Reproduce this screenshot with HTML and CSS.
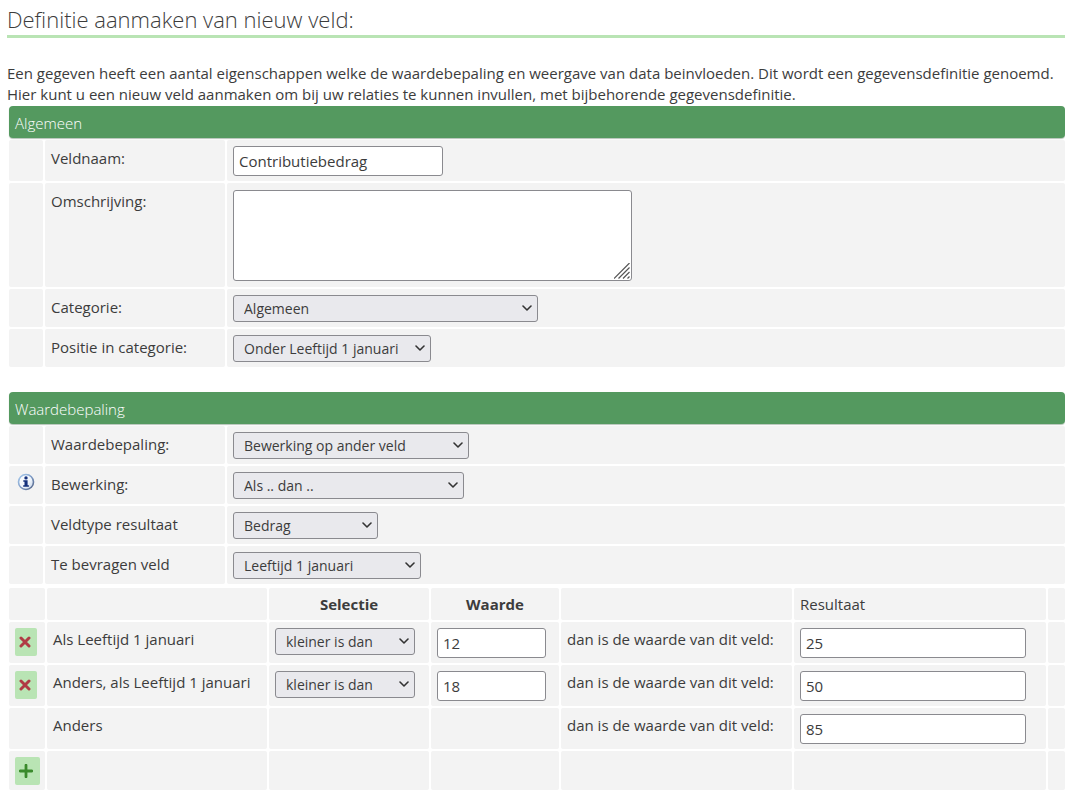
FILE: index.html
```
<!DOCTYPE html>
<html lang="nl">
<head>
<meta charset="utf-8">
<title>Definitie aanmaken van nieuw veld</title>
<link rel="stylesheet" href="styles.css">
</head>
<body>
<main class="page">
  <h1 class="title">Definitie aanmaken van nieuw veld:</h1>
  <p class="intro">Een gegeven heeft een aantal eigenschappen welke de waardebepaling en weergave van data beinvloeden. Dit wordt een gegevensdefinitie genoemd.<br>Hier kunt u een nieuw veld aanmaken om bij uw relaties te kunnen invullen, met bijbehorende gegevensdefinitie.</p>

  <form>
    <section class="panel">
      <h2 class="panel-title">Algemeen</h2>
      <div class="row">
        <div class="cell"></div>
        <div class="cell label"><label for="veldnaam">Veldnaam:</label></div>
        <div class="cell"><input class="field name-field" id="veldnaam" type="text" value="Contributiebedrag"></div>
      </div>
      <div class="row">
        <div class="cell"></div>
        <div class="cell label"><label for="omschrijving">Omschrijving:</label></div>
        <div class="cell area-cell">
          <div class="area-wrap">
            <textarea class="field area" id="omschrijving"></textarea>
            <svg class="grip" width="16" height="16" viewBox="0 0 16 16" aria-hidden="true"><path d="M0 15.500L15.500 0M4.500 15.500L15.500 4.500M9 15.500L15.500 9M13.500 15.500L15.500 13.500" stroke="#555" stroke-width="1.200" fill="none"/></svg>
          </div>
        </div>
      </div>
      <div class="row">
        <div class="cell"></div>
        <div class="cell label"><label for="categorie">Categorie:</label></div>
        <div class="cell"><select class="select w-305" id="categorie"><option>Algemeen</option></select></div>
      </div>
      <div class="row">
        <div class="cell"></div>
        <div class="cell label"><label for="positie">Positie in categorie:</label></div>
        <div class="cell"><select class="select w-198" id="positie"><option>Onder Leeftijd 1 januari</option></select></div>
      </div>
    </section>

    <section class="panel">
      <h2 class="panel-title">Waardebepaling</h2>
      <div class="row">
        <div class="cell"></div>
        <div class="cell label"><label for="bepaling">Waardebepaling:</label></div>
        <div class="cell"><select class="select w-236" id="bepaling"><option>Bewerking op ander veld</option></select></div>
      </div>
      <div class="row">
        <div class="cell info">
          <svg width="18" height="18" viewBox="0 0 18 18" role="img" aria-label="Informatie">
            <defs>
              <linearGradient id="ring" x1="0" y1="0" x2="1" y2="1"><stop offset="0" stop-color="#a9cdf0"/><stop offset=".5" stop-color="#7f9cc6"/><stop offset="1" stop-color="#4f5f82"/></linearGradient>
              <linearGradient id="disc" x1="0" y1="0" x2="1" y2="1"><stop offset="0" stop-color="#fff"/><stop offset=".6" stop-color="#eef4fb"/><stop offset="1" stop-color="#bccbe0"/></linearGradient>
            </defs>
            <circle cx="9" cy="9" r="7.500" fill="url(#disc)" stroke="url(#ring)" stroke-width="1.600"/>
            <circle cx="9" cy="4.900" r="1.700" fill="#14307c"/>
            <path d="M6.300 7.200H10.600V12.200H11.900V13.700H6.200V12.200H7.500V8.700H6.300Z" fill="#14307c"/>
          </svg>
        </div>
        <div class="cell label"><label for="bewerking">Bewerking:</label></div>
        <div class="cell"><select class="select w-231" id="bewerking"><option>Als .. dan ..</option></select></div>
      </div>
      <div class="row">
        <div class="cell"></div>
        <div class="cell label"><label for="veldtype">Veldtype resultaat</label></div>
        <div class="cell"><select class="select w-145" id="veldtype"><option>Bedrag</option></select></div>
      </div>
      <div class="row">
        <div class="cell"></div>
        <div class="cell label"><label for="bevragen">Te bevragen veld</label></div>
        <div class="cell"><select class="select w-188" id="bevragen"><option>Leeftijd 1 januari</option></select></div>
      </div>
    </section>

    <table class="rules">
      <colgroup><col class="c-act"><col class="c-cond"><col class="c-sel"><col class="c-val"><col class="c-text"><col class="c-res"><col></colgroup>
      <thead>
        <tr><td></td><td></td><th scope="col">Selectie</th><th scope="col">Waarde</th><td></td><th class="plain" scope="col">Resultaat</th><td></td></tr>
      </thead>
      <tbody>
        <tr>
          <td><button class="icon-btn" type="button" aria-label="Verwijderen"><svg width="12" height="12" viewBox="0 0 12 12"><path d="M2 2L10 10M10 2L2 10" stroke="#b03a44" stroke-width="3" stroke-linecap="round"/></svg></button></td>
          <td class="text">Als Leeftijd 1 januari</td>
          <td><select class="select w-140" aria-label="Selectie 1"><option>kleiner is dan</option></select></td>
          <td><input class="field value-field" type="text" value="12" aria-label="Waarde 1"></td>
          <td class="text"><label for="r1">dan is de waarde van dit veld:</label></td>
          <td><input class="field result-field" id="r1" type="text" value="25"></td>
          <td></td>
        </tr>
        <tr>
          <td><button class="icon-btn" type="button" aria-label="Verwijderen"><svg width="12" height="12" viewBox="0 0 12 12"><path d="M2 2L10 10M10 2L2 10" stroke="#b03a44" stroke-width="3" stroke-linecap="round"/></svg></button></td>
          <td class="text">Anders, als Leeftijd 1 januari</td>
          <td><select class="select w-140" aria-label="Selectie 2"><option>kleiner is dan</option></select></td>
          <td><input class="field value-field" type="text" value="18" aria-label="Waarde 2"></td>
          <td class="text"><label for="r2">dan is de waarde van dit veld:</label></td>
          <td><input class="field result-field" id="r2" type="text" value="50"></td>
          <td></td>
        </tr>
        <tr>
          <td></td>
          <td class="text">Anders</td>
          <td></td>
          <td></td>
          <td class="text"><label for="r3">dan is de waarde van dit veld:</label></td>
          <td><input class="field result-field" id="r3" type="text" value="85"></td>
          <td></td>
        </tr>
        <tr class="add-row">
          <td><button class="icon-btn add" type="button" aria-label="Toevoegen"><svg width="14" height="14" viewBox="0 0 14 14"><path d="M7 1.200V12.800M1.200 7H12.800" stroke="#3a8a2c" stroke-width="2.800" stroke-linecap="round"/></svg></button></td>
          <td></td><td></td><td></td><td></td><td></td><td></td>
        </tr>
      </tbody>
    </table>
  </form>
</main>
</body>
</html>
```
FILE: styles.css
```
* { box-sizing: border-box; }

body {
  margin: 0;
  background: #fff;
  color: #3c3c3c;
  font: 15px/21px "Open Sans", "Noto Sans", sans-serif;
}

.page { padding-left: 7px; overflow-x: clip; }

.title {
  margin: 0 0 25px;
  padding-top: 3px;
  border-bottom: 3px solid #b9e4b4;
  font-size: 22px;
  font-weight: 300;
  line-height: 32px;
}

.intro { margin: 0 0 1px; }

.panel {
  display: grid;
  gap: 2px;
  margin: 0 0 25px 2px;
}

.panel-title {
  margin: 0;
  padding: 7px 6px 4px;
  border-radius: 4px;
  background: #54995f;
  box-shadow: 0 1px 1px #b5c4b8;
  color: #fff;
  font-size: 15px;
  font-weight: 300;
}

.row {
  display: grid;
  grid-template-columns: 34px 180px 1fr;
  gap: 2px;
}

.cell {
  min-height: 38px;
  padding: 6px 6px 5px;
  border-radius: 2px;
  background: #f3f3f3;
}

.cell.label { padding-top: 8px; }
.cell.info { padding: 7px 0 0 8px; }
.cell.area-cell { padding: 7px 6px 6px; }
.info svg, .icon-btn svg { display: block; }

.field, .select {
  display: block;
  border: 1px solid #8a8a8f;
  border-radius: 3px;
  color: #3c3c3c;
  font: inherit;
}

.field {
  height: 30px;
  padding: 0 5px;
  background: #fff;
}

.area-wrap { position: relative; width: 399px; }
.area { width: 100%; height: 91px; resize: none; }
.grip { position: absolute; right: 2px; bottom: 2px; pointer-events: none; }

.select {
  height: 27px;
  padding: 0 24px 0 10px;
  appearance: none;
  background: #e9e9ed url("data:image/svg+xml,%3Csvg xmlns='http://www.w3.org/2000/svg' width='10' height='7'%3E%3Cpath d='M1 1l4 4 4-4' fill='none' stroke='%23333' stroke-width='1.6' stroke-linecap='round' stroke-linejoin='round'/%3E%3C/svg%3E") no-repeat right 5px center;
  font-size: 14px;
}

.name-field { width: 210px; }
.value-field { width: 109px; }
.result-field { width: 226px; }
.w-140 { width: 140px; }
.w-145 { width: 145px; }
.w-188 { width: 188px; }
.w-198 { width: 198px; }
.w-231 { width: 231px; }
.w-236 { width: 236px; }
.w-305 { width: 305px; }

.panel:last-of-type { margin-bottom: 2px; }

.rules {
  width: calc(100% + 2px);
  table-layout: fixed;
  border-spacing: 2px;
}

.c-act { width: 36px; }
.c-cond { width: 220px; }
.c-sel { width: 160px; }
.c-val { width: 128px; }
.c-text { width: 231px; }
.c-res { width: 252px; }

.rules td, .rules th {
  height: 41px;
  padding: 6px 6px 5px;
  border-radius: 2px;
  background: #f3f3f3;
  vertical-align: top;
}

.rules thead td, .rules thead th { height: 32px; }
.rules .add-row td { height: 39px; }
.rules .text { padding-top: 7px; white-space: nowrap; }
.rules .plain { font-weight: 400; text-align: left; }

.icon-btn {
  display: grid;
  place-items: center;
  width: 22px;
  height: 28px;
  padding: 0 3px 0 0;
  border: 0;
  border-radius: 2px;
  background: #b9e4b4;
}

.icon-btn.add { width: 25px; }
```
